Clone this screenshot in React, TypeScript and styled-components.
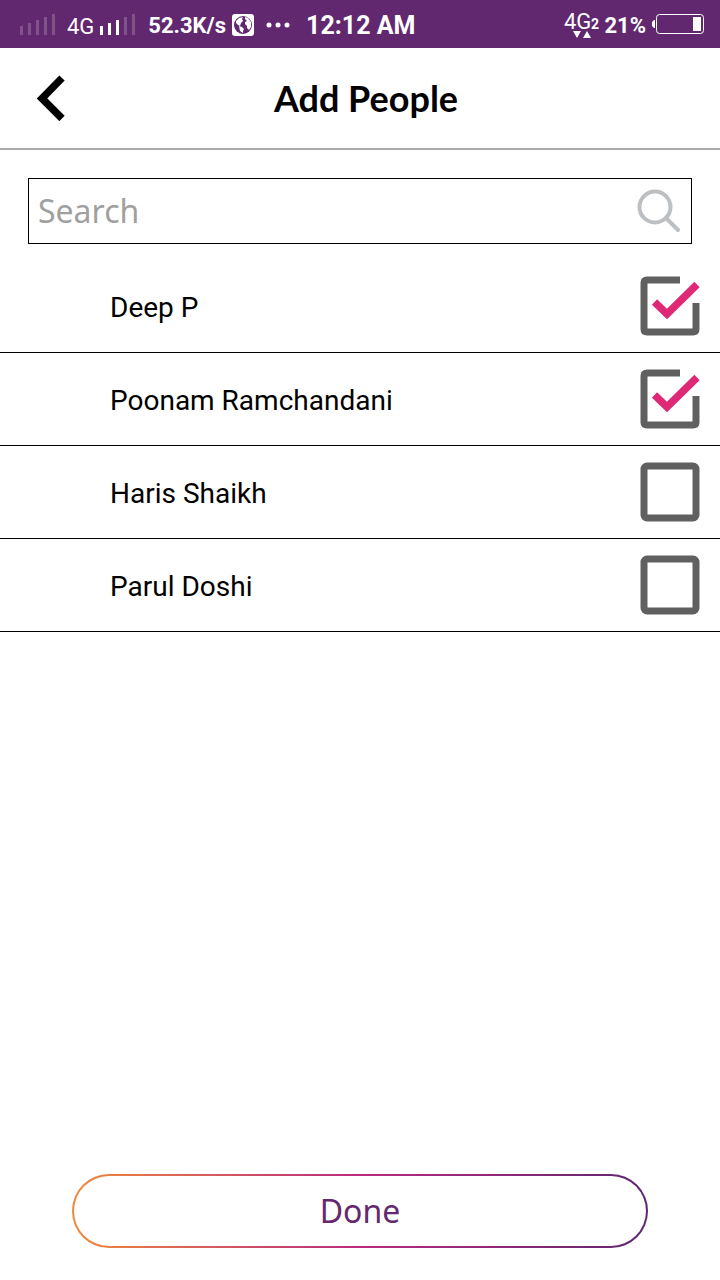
import React, { useState } from "react";
import styled, { createGlobalStyle } from "styled-components";

const GlobalStyle = createGlobalStyle`
  *, *::before, *::after { box-sizing: border-box; }
  body {
    margin: 0;
    background: #ffffff;
    color: #000000;
    font-family: Roboto, "Liberation Sans", sans-serif;
  }
`;

const Screen = styled.div`
  display: flex;
  flex-direction: column;
  min-height: 100vh;
`;

const StatusBar = styled.div`
  display: flex;
  align-items: center;
  justify-content: space-between;
  height: 48px;
  padding: 2px 16px 0 20px;
  background: #61286f;
  color: #ffffff;
`;

const StatusGroup = styled.div<{ $gap: number }>`
  display: flex;
  align-items: center;
  gap: ${({ $gap }) => $gap}px;
  white-space: nowrap;
`;

const StatusText = styled.span<{ $size: number }>`
  padding-top: 2px;
  font-size: ${({ $size }) => $size}px;
  line-height: 28px;
  font-weight: 700;
`;

const NetworkText = styled.span`
  font-size: 22px;
  line-height: 28px;
  padding-top: 4px;
`;

const Icon = styled.svg`
  display: block;
  flex: none;
`;

const Header = styled.header`
  display: grid;
  grid-template-columns: 72px 1fr 72px;
  align-items: center;
  height: 102px;
  padding: 0 16px;
  border-bottom: 2px solid #a9a9a9;
`;

const BackButton = styled.button`
  display: flex;
  align-items: center;
  justify-content: center;
  height: 72px;
  padding: 0;
  border: 0;
  background: none;
  color: inherit;
`;

const Title = styled.h1`
  margin: 0;
  padding-left: 12px;
  font-family: Lato, sans-serif;
  font-size: 36px;
  line-height: 44px;
  font-weight: 700;
  text-align: center;
`;

const SearchBox = styled.label`
  display: flex;
  align-items: center;
  height: 66px;
  margin: 28px 28px 16px;
  padding: 0 10px 0 9px;
  border: 1px solid #000000;
`;

const SearchInput = styled.input`
  flex: 1;
  min-width: 0;
  height: 100%;
  padding: 0 0 2px;
  border: 0;
  outline: 0;
  background: none;
  font-family: "Noto Sans", sans-serif;
  font-size: 32px;
  &::placeholder {
    color: #a0a0a0;
    opacity: 1;
  }
`;

const PeopleList = styled.ul`
  flex: 1;
  margin: 0;
  padding: 0;
  list-style: none;
`;

const PersonItem = styled.li`
  border-bottom: 1px solid #000000;
`;

const PersonRow = styled.label`
  display: flex;
  align-items: center;
  justify-content: space-between;
  padding: 16px 20px 16px 110px;
`;

const PersonName = styled.span`
  padding-top: 4px;
  font-size: 28px;
  line-height: 36px;
`;

const CheckControl = styled.span`
  position: relative;
  width: 60px;
  height: 60px;
`;

const CheckInput = styled.input`
  position: absolute;
  inset: 0;
  width: 100%;
  height: 100%;
  margin: 0;
  opacity: 0;
`;

const Footer = styled.footer`
  display: flex;
  padding: 32px 72px;
`;

const DoneButton = styled.button`
  flex: 1;
  height: 74px;
  padding: 0;
  border: 2px solid transparent;
  border-radius: 37px;
  background:
    linear-gradient(#ffffff, #ffffff) padding-box,
    linear-gradient(90deg, #ef8a3c 0%, #b92a80 50%, #5f2673 100%) border-box;
  color: #65286f;
  font-family: "Noto Sans", sans-serif;
  font-size: 32px;
  line-height: 44px;
`;

function SignalBars({ active }: { active: number[] }) {
  return (
    <Icon width="36" height="22" viewBox="0 0 36 22" aria-hidden="true">
      {[0, 1, 2, 3, 4].map((i) => (
        <rect
          key={i}
          x={i * 8}
          y={12 - i * 3}
          width="3"
          height={9 + i * 3}
          fill="#fff"
          opacity={active.includes(i) ? 1 : 0.2}
        />
      ))}
    </Icon>
  );
}

function GlobeIcon() {
  return (
    <Icon width="22" height="22" viewBox="0 0 22 22" aria-hidden="true">
      <rect width="22" height="22" rx="3" fill="#fff" />
      <circle cx="11" cy="11" r="9" fill="#61286f" />
      <path d="M4 7 7 4l4-1-1 2 1 2-2 2-1 3-2-1-2-2zM7 12l3 1 2 2-1 2 0 2-3-2zM13 3l3 1 3 4 0 5-2 3-2-2 0-2-2-2 0-2 2-1-2-2z" fill="#fff" />
    </Icon>
  );
}

function DataNetworkIcon() {
  return (
    <Icon width="38" height="40" viewBox="0 0 38 40" role="img" aria-label="4G, SIM 2">
      <text x="2" y="24" fill="#fff" fontFamily="Roboto, sans-serif" fontSize="22">4G</text>
      <text x="29" y="24" fill="#fff" fontFamily="Roboto, sans-serif" fontWeight="700" fontSize="14">2</text>
      <path d="M11 26h8l-4 7zM21 33h8l-4-7z" fill="#fff" />
    </Icon>
  );
}

function BatteryIcon() {
  return (
    <Icon width="52" height="22" viewBox="0 0 52 22" aria-hidden="true">
      <path d="M3 6v8H2L0 12V8l2-2z" fill="#fff" />
      <rect x="4.5" y=".5" width="47" height="19" rx="3" fill="none" stroke="#fff" />
      <rect x="41" y="3" width="8" height="14" fill="#fff" />
    </Icon>
  );
}

function CheckboxIcon({ checked }: { checked: boolean }) {
  return (
    <Icon width="60" height="60" viewBox="0 0 60 60" aria-hidden="true">
      {checked ? (
        <>
          <path
            d="M40 4H7Q4 4 4 7v46q0 3 3 3h46q3 0 3-3V27"
            fill="none"
            stroke="#606060"
            strokeWidth="7"
          />
          <path d="M14.500 26 27 38 57 8.500" fill="none" stroke="#df2876" strokeWidth="7.500" />
        </>
      ) : (
        <rect x="4" y="4" width="52" height="52" rx="3" fill="none" stroke="#606060" strokeWidth="7" />
      )}
    </Icon>
  );
}

const people = [
  { name: "Deep P", selected: true },
  { name: "Poonam Ramchandani", selected: true },
  { name: "Haris Shaikh", selected: false },
  { name: "Parul Doshi", selected: false },
];

function Person({ name, selected }: { name: string; selected: boolean }) {
  const [checked, setChecked] = useState(selected);
  return (
    <PersonItem>
      <PersonRow>
        <PersonName>{name}</PersonName>
        <CheckControl>
          <CheckboxIcon checked={checked} />
          <CheckInput
            type="checkbox"
            checked={checked}
            onChange={(event) => setChecked(event.target.checked)}
          />
        </CheckControl>
      </PersonRow>
    </PersonItem>
  );
}

export default function App() {
  return (
    <Screen>
      <GlobalStyle />
      <StatusBar>
        <StatusGroup $gap={16}>
          <StatusGroup $gap={12}>
            <StatusGroup $gap={11}>
              <SignalBars active={[]} />
              <StatusGroup $gap={6}>
                <NetworkText>4G</NetworkText>
                <SignalBars active={[0, 1, 2]} />
              </StatusGroup>
            </StatusGroup>
            <StatusGroup $gap={6}>
              <StatusText $size={22}>52.3K/s</StatusText>
              <GlobeIcon />
            </StatusGroup>
            <Icon width="24" height="6" viewBox="0 0 24 6" aria-hidden="true">
              <circle cx="3" cy="3" r="2.500" fill="#fff" />
              <circle cx="12" cy="3" r="2.500" fill="#fff" />
              <circle cx="21" cy="3" r="2.500" fill="#fff" />
            </Icon>
          </StatusGroup>
          <StatusText $size={25}>12:12 AM</StatusText>
        </StatusGroup>
        <StatusGroup $gap={6}>
          <StatusGroup $gap={4}>
            <DataNetworkIcon />
            <StatusText $size={22}>21%</StatusText>
          </StatusGroup>
          <BatteryIcon />
        </StatusGroup>
      </StatusBar>
      <Header>
        <BackButton type="button" aria-label="Back">
          <Icon width="30" height="46" viewBox="0 0 30 46" aria-hidden="true">
            <path d="M25 3 5 23.500l20 20" fill="none" stroke="currentColor" strokeWidth="7.500" />
          </Icon>
        </BackButton>
        <Title>Add People</Title>
      </Header>
      <SearchBox>
        <SearchInput type="text" placeholder="Search" aria-label="Search" />
        <Icon width="46" height="46" viewBox="0 0 46 46" aria-hidden="true">
          <circle cx="20" cy="19" r="15.500" fill="none" stroke="#bcc0c3" strokeWidth="4" />
          <path d="m31 30 12 12" fill="none" stroke="#bcc0c3" strokeWidth="4" strokeLinecap="round" />
        </Icon>
      </SearchBox>
      <PeopleList>
        {people.map((person) => (
          <Person key={person.name} name={person.name} selected={person.selected} />
        ))}
      </PeopleList>
      <Footer>
        <DoneButton type="button">Done</DoneButton>
      </Footer>
    </Screen>
  );
}
